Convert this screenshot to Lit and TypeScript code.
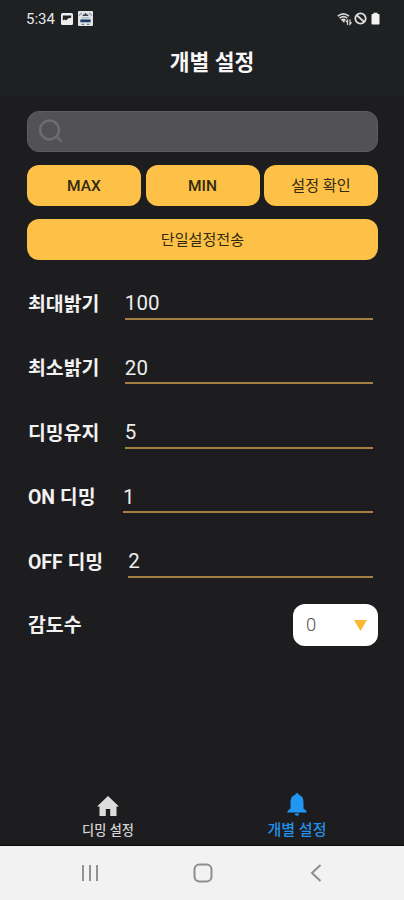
import { LitElement, html, css } from "lit";
import { customElement, state } from "lit/decorators.js";

interface Field {
  label: string;
  value: string;
}

@customElement("status-bar")
class StatusBar extends LitElement {
  static styles = css`
    :host {
      display: flex;
      height: 37px;
      padding: 0 22px 0 26px;
      align-items: center;
      box-sizing: border-box;
      color: #e8e8e8;
      background: #1e2021;
    }
    .time {
      font-size: 15px;
      line-height: 20px;
      width: 35px;
      white-space: nowrap;
      padding-top: 1px;
    }
    .picture { width: 12px; height: 12px; }
    .train { width: 15px; height: 15px; margin-left: 5px; }
    .icons { margin-left: auto; display: flex; align-items: center; gap: 2px; }
    svg { display: block; }
  `;
  render() {
    return html`
      <span class="time">5:34</span>
      <svg class="picture" viewBox="0 0 12 12">
        <rect width="12" height="12" rx="1.5" fill="#eee" />
        <path d="M1.8 2.5h8.4v2.2L7 5.6 5 7.6 3.6 6.4 1.8 7.6Z" fill="#252627" />
      </svg>
      <svg class="train" viewBox="0 0 16 16">
        <rect width="16" height="16" rx="1" fill="#e2e4e8" />
        <path d="M1 5l3-3M12 2l3 3" stroke="#8d959e" stroke-width="1.2" />
        <path d="M5 4.500h6M8 2v2" stroke="#39424c" stroke-width="1.500" />
        <rect x="4" y="6.500" width="8" height="1.500" fill="#b0bdca" />
        <rect x="2.500" y="9" width="11" height="3" fill="#1e3c69" />
        <path d="M4 14.200h2.500M9.500 14.200H12" stroke="#6a7889" stroke-width="1.200" />
      </svg>
      <div class="icons">
        <svg width="15" height="14" viewBox="0 0 15 14" fill="none" stroke="#d6d6d6">
          <path d="M.8 4.200Q6.400-.6 12 4.200M2.600 6.200q3.800-3 7.600 0M4.400 8.200q2-1.600 4 0" stroke-width="1.700" />
          <path d="M4.500 8h3.800L7 11Z" fill="#d6d6d6" stroke="none" />
          <path d="M10.500 13V8.200L9 10M13 7.500v4.700l1.500-1.800" stroke-width="1.300" />
        </svg>
        <svg width="13" height="13" viewBox="0 0 13 13" fill="none" stroke="#dedede" stroke-width="1.800">
          <circle cx="6.500" cy="6.500" r="5.200" />
          <path d="M2.800 3.200l7.400 6.800" />
        </svg>
        <svg width="13" height="13" viewBox="0 0 13 13" fill="#f2f2f2">
          <path d="M4.500 .8h4V2h1.300q.7 0 .7.7v9.100q0 .7-.7.7H3.200q-.7 0-.7-.7V2.700q0-.7.7-.7h1.300Z" />
        </svg>
      </div>
    `;
  }
}

@customElement("setting-field")
class SettingField extends LitElement {
  static properties = { label: {}, value: {} };
  declare label: string;
  declare value: string;
  static styles = css`
    :host { display: flex; height: 64.5px; box-sizing: border-box; padding: 0 5px 0 1px; }
    .label {
      flex: none;
      font-size: 19.4px;
      font-weight: 700;
      line-height: 28px;
      padding-top: 1.5px;
      margin-right: 25.5px;
      white-space: pre;
      color: #f2f2f2;
    }
    .on { margin-right: 27.5px; }
    .off { margin-right: 25px; }
    .value {
      flex: 1;
      height: 30.5px;
      box-sizing: border-box;
      border-bottom: 2px solid #a37e43;
      font-size: 20.5px;
      line-height: 29px;
      color: #ededed;
    }
  `;
  render() {
    const kind = this.label.startsWith("OFF") ? "off" : this.label.startsWith("ON") ? "on" : "";
    return html`<span class="label ${kind}">${this.label}</span><span class="value">${this.value}</span>`;
  }
}

@customElement("app-root")
class AppRoot extends LitElement {
  @state() private fields: Field[] = [
    { label: "최대밝기", value: "100" },
    { label: "최소밝기", value: "20" },
    { label: "디밍유지", value: "5" },
    { label: "ON 디밍", value: "1" },
    { label: "OFF 디밍", value: "2" },
  ];

  static styles = css`
    :host {
      display: flex;
      flex-direction: column;
      width: 404px;
      height: 900px;
      overflow: hidden;
      background: #1d1d1f;
      font-family: Roboto, "Noto Sans CJK KR", sans-serif;
    }
    svg { display: block; }
    .header {
      height: 59px;
      flex: none;
      background: #1e2022;
      text-align: center;
      color: #f7f7f7;
      font-size: 21.5px;
      font-weight: 700;
      line-height: 52px;
      padding-left: 20px;
      box-sizing: border-box;
    }
    .content { flex: 1; padding: 15px 26px 0 27px; }
    .search {
      height: 41px;
      box-sizing: border-box;
      border: 1px solid #5e5d62;
      border-radius: 12px;
      background: #525155;
      padding: 7px 0 0 10.5px;
    }
    .actions { display: grid; grid-template-columns: repeat(3, 1fr); gap: 13px 4.5px; margin-top: 12.5px; }
    .action {
      height: 41.5px;
      border-radius: 12px;
      background: #fcc146;
      color: #33290f;
      font-size: 15.1px;
      line-height: 42px;
      text-align: center;
    }
    .latin { font-weight: 500; font-size: 15.5px; }
    .wide { grid-column: 1 / -1; height: 41px; }
    .fields { padding-top: 29px; }
    .sensitivity { display: flex; justify-content: space-between; margin-top: -8px; }
    .name { font-size: 19.4px; font-weight: 700; line-height: 28px; color: #f2f2f2; padding: 8px 0 0 1px; }
    .select {
      width: 85px;
      height: 42px;
      box-sizing: border-box;
      padding: 1px 11px 0 13px;
      border-radius: 12px;
      background: #fff;
      color: #555;
      display: flex;
      align-items: center;
      justify-content: space-between;
      font-size: 18.5px;
      font-weight: 300;
    }
    .tabs { display: flex; height: 61px; flex: none; border-bottom: 1px solid #0a0a0b; box-sizing: border-box; }
    .tab { display: flex; flex-direction: column; align-items: center; }
    .home { width: 216px; color: #d4d4d4; font-size: 13.2px; font-weight: 500; padding-top: 11px; }
    .home span { line-height: 20px; margin-top: 4.5px; }
    .single { width: 162px; color: #2490e8; font-size: 15px; font-weight: 500; padding-top: 8px; }
    .single span { line-height: 22px; margin-top: 2.5px; }
    .system {
      display: flex;
      height: 54px;
      flex: none;
      background: #f2f2f2;
      align-items: center;
      justify-content: center;
      gap: 94px;
      padding-left: 2px;
      box-sizing: border-box;
    }
  `;

  render() {
    return html`
      <status-bar></status-bar>
      <div class="header">개별 설정</div>
      <div class="content">
        <div class="search">
          <svg width="24" height="24" viewBox="0 0 24 24" fill="none" stroke="#6d6d70" stroke-width="2.400">
            <circle cx="10.500" cy="11" r="9.500" />
            <path d="M17 17l5.500 5.500" />
          </svg>
        </div>
        <div class="actions">
          <div class="action latin">MAX</div>
          <div class="action latin">MIN</div>
          <div class="action">설정 확인</div>
          <div class="action wide">단일설정전송</div>
        </div>
        <div class="fields">
          ${this.fields.map((f) => html`<setting-field .label=${f.label} .value=${f.value}></setting-field>`)}
        </div>
        <div class="sensitivity">
          <span class="name">감도수</span>
          <div class="select">
            <span>0</span>
            <svg width="13" height="11" viewBox="0 0 13 11"><path d="M0 0h13L6.500 11Z" fill="#fbb92f" /></svg>
          </div>
        </div>
      </div>
      <div class="tabs">
        <div class="tab home">
          <svg width="22" height="20" viewBox="0 0 22 20">
            <path d="M11 0 22 10.500H19.500V20H13.200V13H8.800V20H2.500V10.500H0Z" fill="#dcdcdc" />
          </svg>
          <span>디밍 설정</span>
        </div>
        <div class="tab single">
          <svg width="20" height="23" viewBox="0 0 20 23" fill="#2196f3">
            <path d="M10 0q1.500 0 1.800 1.800Q16.500 3.200 16.500 9v6.500L19.500 18v1.500H.500V18l3-2.500V9q0-5.800 4.700-7.200Q8.500 0 10 0ZM7.800 20.500h4.400Q12 22.700 10 22.700T7.800 20.500Z" />
          </svg>
          <span>개별 설정</span>
        </div>
      </div>
      <div class="system">
        <svg width="18" height="18" viewBox="0 0 18 18" stroke="#929292" stroke-width="2"><path d="M2 1v16M9 1v16M16 1v16" /></svg>
        <svg width="20" height="20" viewBox="0 0 20 20" fill="none" stroke="#8d8d8d" stroke-width="2"><rect x="1.500" y="1.500" width="17" height="17" rx="5" /></svg>
        <svg width="18" height="18" viewBox="0 0 18 18" fill="none" stroke="#8d8d8d" stroke-width="2"><path d="M13.500 1 5 9l8.500 8" /></svg>
      </div>
    `;
  }
}
